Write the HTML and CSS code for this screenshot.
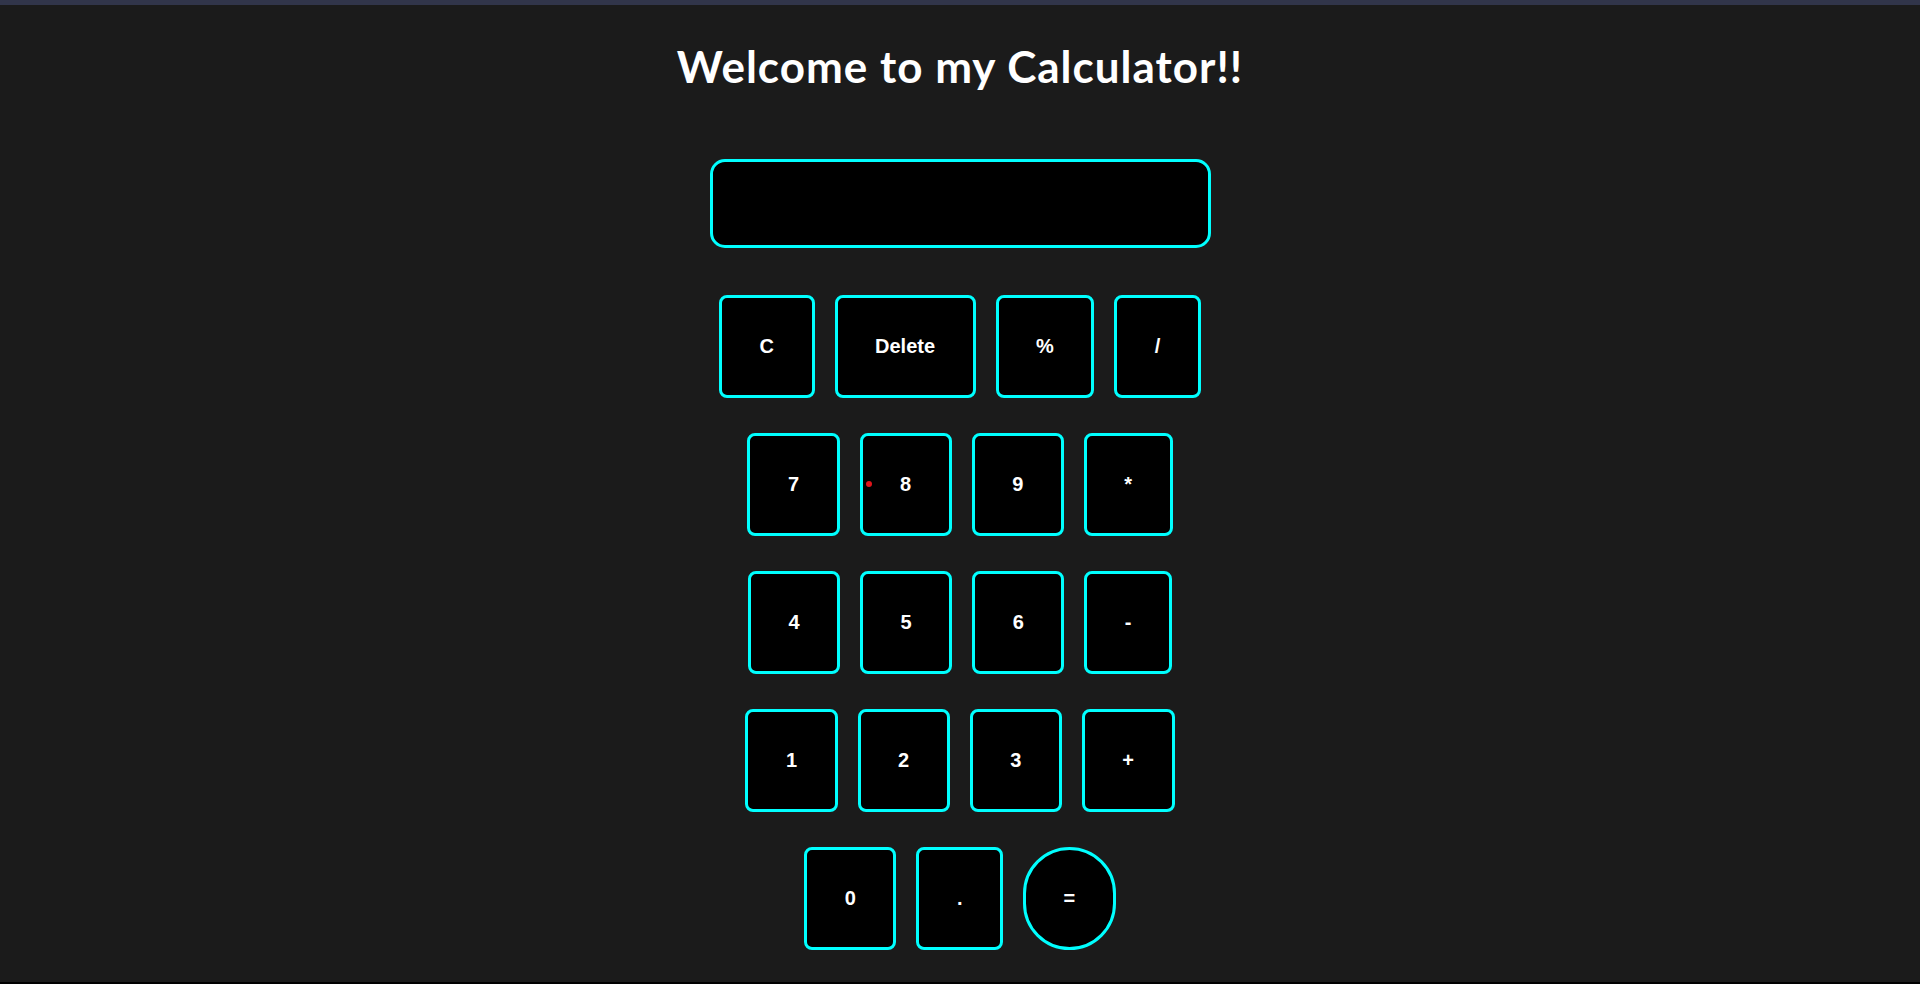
FILE: index.html
```html
<!DOCTYPE html>
<html lang="en">
<head>
<meta charset="utf-8">
<title>Calculator</title>
<link rel="stylesheet" href="styles.css">
</head>
<body>
<div class="page">
  <h1 class="title">Welcome to my Calculator!!</h1>
  <div class="display"></div>
  <div class="keys">
    <div class="row">
      <button class="key">C</button>
      <button class="key">Delete</button>
      <button class="key">%</button>
      <button class="key">/</button>
    </div>
    <div class="row">
      <button class="key">7</button>
      <button class="key">8</button>
      <button class="key">9</button>
      <button class="key">*</button>
    </div>
    <div class="row">
      <button class="key">4</button>
      <button class="key">5</button>
      <button class="key">6</button>
      <button class="key">-</button>
    </div>
    <div class="row">
      <button class="key">1</button>
      <button class="key">2</button>
      <button class="key">3</button>
      <button class="key">+</button>
    </div>
    <div class="row">
      <button class="key">0</button>
      <button class="key">.</button>
      <button class="key key-equals">=</button>
    </div>
  </div>
  <span class="pointer-dot"></span>
</div>
</body>
</html>
```
FILE: styles.css
```css
html, body {
  margin: 0;
  padding: 0;
  background: #1b1b1b;
}

.page {
  position: relative;
  height: 984px;
  box-sizing: border-box;
  border-top: 5px solid #31354a;
  border-bottom: 2px solid #000;
  background: #1b1b1b;
  display: flex;
  flex-direction: column;
  align-items: center;
  overflow: hidden;
}

.title {
  margin: 35px 0 0 0;
  font-family: Lato, "Open Sans", sans-serif;
  font-weight: 700;
  font-size: 44px;
  line-height: 52px;
  letter-spacing: 1px;
  color: #fff;
}

.display {
  margin-top: 67px;
  width: 501px;
  height: 89px;
  box-sizing: border-box;
  background: #000;
  border: 3px solid #00ffff;
  border-radius: 15px;
}

.keys {
  margin-top: 47px;
  display: flex;
  flex-direction: column;
  align-items: center;
  gap: 35px;
}

.row {
  display: flex;
  gap: 20px;
}

.key {
  margin: 0;
  padding: 37px 37.5px;
  background: #000;
  color: #fff;
  border: 3px solid #00ffff;
  border-radius: 8px;
  font-family: "Liberation Sans", Arial, sans-serif;
  font-weight: 700;
  font-size: 20px;
  line-height: 23px;
}

.key-equals {
  border-radius: 50px;
}

.pointer-dot {
  position: absolute;
  left: 866px;
  top: 476px;
  width: 6px;
  height: 6px;
  border-radius: 50%;
  background: #e0141a;
}
```
